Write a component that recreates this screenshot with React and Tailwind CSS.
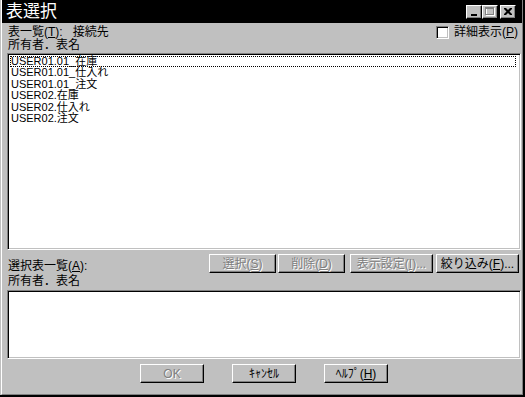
import React from 'react';

const font = "font-['Liberation_Sans','Noto_Sans_CJK_JP',sans-serif]";

const items = [
  'USER01.01_在庫',
  'USER01.01_仕入れ',
  'USER01.01_注文',
  'USER02.在庫',
  'USER02.仕入れ',
  'USER02.注文',
];

// 立体ボタン（Win95風）
const Button = ({ children, disabled, className = '' }) => (
  <button
    type="button"
    className={`h-[19px] bg-[#c0c0c0] border border-t-white border-l-white border-r-black border-b-black shadow-[inset_-1px_-1px_#808080] text-[12px] leading-none flex items-center justify-center ${disabled ? 'text-[#808080] [text-shadow:1px_1px_0_#fff]' : 'text-black'} ${className}`}
  >
    {children}
  </button>
);

const Mn = ({ children }) => <span className="underline underline-offset-1">{children}</span>;

const TitleButton = ({ children, className = '' }) => (
  <div className={`w-[16px] h-[14px] bg-[#c0c0c0] border border-t-white border-l-white border-r-black border-b-black shadow-[inset_-1px_-1px_#808080] flex items-center justify-center ${className}`}>
    {children}
  </div>
);

const ListBox = ({ className = '', children }) => (
  <div className={`bg-white border border-t-[#808080] border-l-[#808080] border-b-white border-r-white shadow-[inset_1px_1px_#000,inset_-1px_-1px_#c0c0c0] ${className}`}>
    {children}
  </div>
);

export default function App() {
  return (
    <div className={`w-[525px] h-[397px] bg-[#c0c0c0] pl-[1px] border-r-2 border-b-2 border-black flex flex-col ${font}`}>
      <div className="flex-1 flex flex-col border-l border-white border-r border-b border-r-[#808080] border-b-[#808080]">
        {/* タイトルバー */}
        <div className="h-[23px] bg-black flex items-center justify-between pl-[4px] pr-[6px]">
          <span className="text-white text-[17px] leading-none">表選択</span>
          <div className="flex items-center">
            <TitleButton>
              <svg width="8" height="8" viewBox="0 0 8 8" className="mt-[1px]">
                <rect x="1" y="6" width="6" height="2" fill="#000" />
              </svg>
            </TitleButton>
            <TitleButton>
              <svg width="10" height="9" viewBox="0 0 10 9">
                <rect x="1.5" y="1.5" width="8" height="7" fill="none" stroke="#fff" />
                <rect x="0.5" y="0.5" width="8" height="7" fill="none" stroke="#808080" />
                <rect x="0" y="0" width="9" height="2" fill="#808080" />
              </svg>
            </TitleButton>
            <TitleButton className="ml-[2px]">
              <svg width="8" height="7" viewBox="0 0 8 7">
                <path d="M0 0h2l2 2 2-2h2v1L5.5 3.5 8 6v1H6L4 5 2 7H0V6l2.5-2.5L0 1z" fill="#000" />
              </svg>
            </TitleButton>
          </div>
        </div>

        <div className="flex flex-col pl-[5px] pr-[1px]">
          <div className="mt-[2px] h-[14px] flex items-center justify-between text-[12px] leading-none">
            <span className="ml-[1px]">
              表一覧(<Mn>T</Mn>):&nbsp;&nbsp;&nbsp;接続先
            </span>
            <span className="flex items-center mr-[3px]">
              <span className="w-[13px] h-[13px] bg-white border border-t-[#808080] border-l-[#808080] border-b-white border-r-white shadow-[inset_1px_1px_#000,inset_-1px_-1px_#c0c0c0] mr-[5px]" />
              詳細表示(<Mn>P</Mn>)
            </span>
          </div>
          <div className="h-[13px] ml-[1px] text-[12px] leading-[13px]">所有者．表名</div>

          <ListBox className="mt-[1px] h-[197px] p-[2px]">
            {items.map((t, i) => (
              <div
                key={t}
                className={`text-[11px] leading-[11.4px] pl-[1px] mr-[2px] whitespace-nowrap ${i === 0 ? 'outline-1 outline-dotted outline-black -outline-offset-1' : ''}`}
              >
                {t}
              </div>
            ))}
          </ListBox>

          <div className="mt-[4px] h-[19px] flex items-end justify-between">
            <span className="ml-[1px] text-[12px] leading-none mb-[1px]">
              選択表一覧(<Mn>A</Mn>):
            </span>
            <div className="flex mr-[2px]">
              <Button disabled className="w-[67px]">選択(<Mn>S</Mn>)</Button>
              <Button disabled className="w-[67px] ml-[2px]">削除(<Mn>D</Mn>)</Button>
              <Button disabled className="w-[83px] ml-[5px]">表示設定(<Mn>I</Mn>)...</Button>
              <Button className="w-[83px] ml-[3px]">絞り込み(<Mn>F</Mn>)...</Button>
            </div>
          </div>

          <div className="mt-[2px] h-[13px] ml-[1px] text-[12px] leading-[13px]">所有者．表名</div>
          <ListBox className="mt-[2px] h-[69px]" />

          <div className="mt-[5px] flex justify-center gap-[28px]">
            <Button disabled className="w-[64px]">OK</Button>
            <Button className="w-[64px]">ｷｬﾝｾﾙ</Button>
            <Button className="w-[64px]">ﾍﾙﾌﾟ(<Mn>H</Mn>)</Button>
          </div>
        </div>
      </div>
    </div>
  );
}
